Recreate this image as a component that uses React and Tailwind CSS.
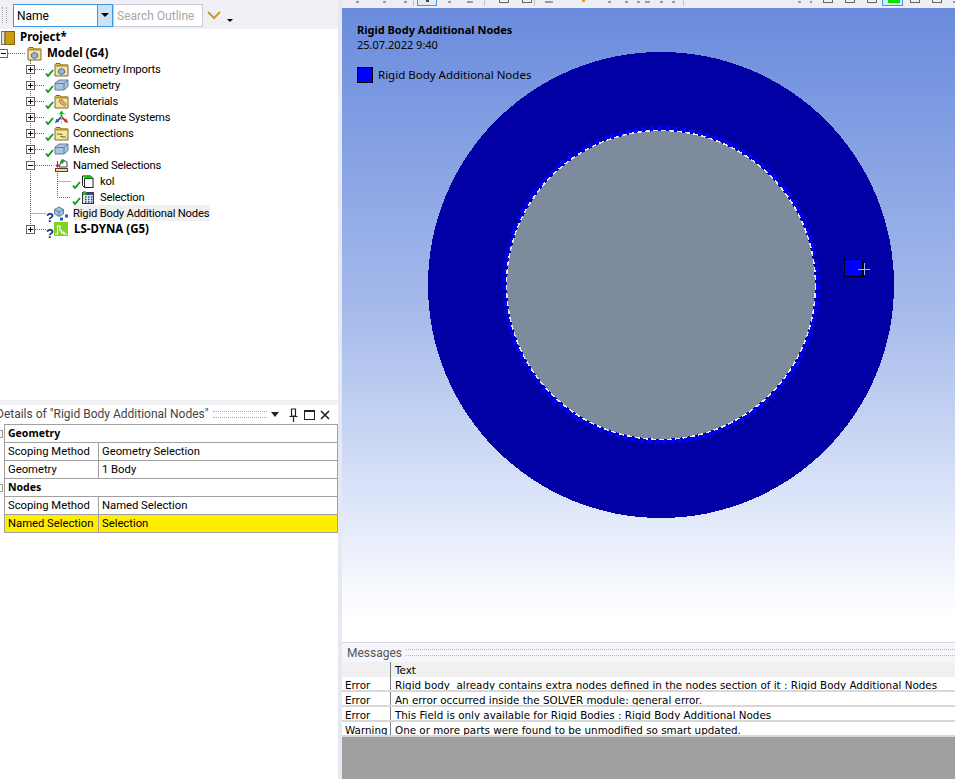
const Check = () => (
  <svg width="9" height="8" viewBox="0 0 9 8" className="block shrink-0">
    <path d="M1 4.5 L3 7 L8 1" fill="none" stroke="#0f9a1f" strokeWidth="1.9" />
  </svg>
);

const Question = () => (
  <span className="block w-[7px] text-center font-['Liberation_Sans',sans-serif] text-[13px] leading-[11px] font-bold text-[#14287f]">
    ?
  </span>
);

const Folder = ({ fill = "#f1e2a6", children }) => (
  <svg width="15" height="15" viewBox="0 0 15 15" className="block">
    <path d="M1 14V2.5L2 1.5H6L7 3H14V14Z" fill={fill} stroke="#7d6a2a" />
    <rect x="1.5" y="2.5" width="12" height="2" fill="#b8901f" />
    {children}
  </svg>
);

const Box = () => (
  <svg width="15" height="15" viewBox="0 0 15 15" className="block">
    <path d="M1 5L5 2H14V8.5L10 12H1Z" fill="#a9c4de" stroke="#5f7f9e" />
    <path d="M1 5.5H10V12M10 5.5L14 2.5" fill="none" stroke="#5f7f9e" />
  </svg>
);

const hex = (
  <path d="M4.5 8L7.5 6.3L10.5 8V11L7.5 12.7L4.5 11Z" fill="#8fb3d8" stroke="#3c5f86" strokeWidth="0.8" />
);

const icons = {
  project: (
    <svg width="14" height="14" viewBox="0 0 14 14" className="block">
      <rect x="0.5" y="0.5" width="3.5" height="13" fill="#e4e4e4" stroke="#777" />
      <rect x="4" y="0.5" width="9.5" height="13" fill="#cb9c12" stroke="#7d6310" />
    </svg>
  ),
  folder: <Folder>{hex}</Folder>,
  box: <Box />,
  materials: (
    <Folder>
      <path d="M5 6L8 5.5L12.5 10.5L10.5 12.5L6 9Z" fill="#e2a671" stroke="#a0703a" strokeWidth="0.7" />
    </Folder>
  ),
  coords: (
    <svg width="15" height="15" viewBox="0 0 15 15" className="block">
      <path d="M3 3L6 6M12 3L9 6M7.5 9V14" stroke="#8aa0b4" strokeWidth="1" strokeDasharray="1 1" />
      <path d="M7.5 7.5V3" stroke="#1fb41f" strokeWidth="2" />
      <path d="M5 4L7.5 0.5L10 4Z" fill="#1fb41f" />
      <path d="M7 7.5L3.5 10.5" stroke="#2a56c8" strokeWidth="2" />
      <path d="M1 13L2.2 8.8L5.2 11.8Z" fill="#2a56c8" />
      <path d="M8 7.5L11.5 10.5" stroke="#d42a2a" strokeWidth="2" />
      <path d="M14 13L12.8 8.8L9.8 11.8Z" fill="#d42a2a" />
    </svg>
  ),
  connections: (
    <Folder fill="#f3e7a8">
      <path d="M3.5 8H7.5V11H12" fill="none" stroke="#80691c" strokeWidth="2" strokeDasharray="1 1" />
    </Folder>
  ),
  named: (
    <svg width="15" height="15" viewBox="0 0 15 15" className="block">
      <path d="M5 9L8 1.5L13 4L13 9Z" fill="#fff" stroke="#444" />
      <path d="M6 4L8.5 1L11 3L8 6Z" fill="#1fa51f" />
      <path d="M3.5 3V8M1.8 6.5L3.5 9L5.2 6.5" fill="none" stroke="#d02020" strokeWidth="1.1" />
      <rect x="1.5" y="10.5" width="12" height="3" fill="#f2dc90" stroke="#444" />
    </svg>
  ),
  kol: (
    <svg width="12" height="15" viewBox="0 0 12 15" className="block">
      <rect x="2.5" y="4.5" width="8.5" height="9" fill="#fff" stroke="#222" />
      <path d="M0.5 2H8.5L11 4.5H2.5V13.5L0.5 11.5Z" fill="#fff" stroke="#222" />
      <path d="M1 1.5H8.5L11 4.5H3Z" fill="#17c017" />
    </svg>
  ),
  selection: (
    <svg width="12" height="15" viewBox="0 0 12 15" className="block">
      <rect x="0.5" y="2.5" width="11" height="11" fill="#dfe6f2" stroke="#333" />
      <rect x="0.5" y="2.5" width="11" height="2.5" fill="#3c4a74" />
      <circle cx="2.5" cy="3" r="2" fill="#17c017" />
      <path d="M3 7H4.5M6 7H7.5M9 7H10.5M3 9.5H4.5M6 9.5H7.5M9 9.5H10.5M3 12H4.5M6 12H7.5M9 12H10.5" stroke="#2a4b9c" strokeWidth="1.4" />
    </svg>
  ),
  rigid: (
    <svg width="15" height="15" viewBox="0 0 15 15" className="block">
      <path d="M0.5 3.5L5 1L9.5 3.5V8L5 10.5L0.5 8Z" fill="#a9c4de" stroke="#5f7f9e" />
      <path d="M0.5 3.5L5 6L9.5 3.5M5 6V10.5" fill="none" stroke="#5f7f9e" />
      <rect x="6" y="11.5" width="3" height="3" fill="#1f5fa8" />
      <rect x="11" y="8.5" width="3" height="3" fill="#1f5fa8" />
    </svg>
  ),
  dyna: (
    <svg width="14" height="14" viewBox="0 0 14 14" className="block">
      <rect width="14" height="14" fill="#7ed321" />
      <path d="M1 12H3.5V4H6V8.5H7.5V11H9V10H10V12H13" fill="none" stroke="#fff" strokeWidth="1.2" />
    </svg>
  ),
};

// one row per line of the outline, guide is what gets drawn in the gutter
const branch = "M30.5 0V4M30.5 12V16M35 8.5H45";
const tree = [
  { text: "Project*", icon: "project", bold: true, iconAt: 1, iconTop: 2, textAt: 20 },
  { text: "Model (G4)", icon: "folder", bold: true, iconAt: 27, textAt: 47, minus: 3, guide: "M8 8.5H26M30.5 15V16" },
  { text: "Geometry Imports", icon: "folder", plus: 30, mark: "check", guide: branch },
  { text: "Geometry", icon: "box", plus: 30, mark: "check", guide: branch },
  { text: "Materials", icon: "materials", plus: 30, mark: "check", guide: branch },
  { text: "Coordinate Systems", icon: "coords", plus: 30, mark: "check", guide: branch },
  { text: "Connections", icon: "connections", plus: 30, mark: "check", guide: branch },
  { text: "Mesh", icon: "box", plus: 30, mark: "check", guide: branch },
  { text: "Named Selections", icon: "named", minus: 30, guide: "M30.5 0V4M30.5 12V16M35 8.5H52M57.5 14V16" },
  { text: "kol", icon: "kol", iconAt: 82, textAt: 100, mark: "check", markAt: 72, guide: "M30.5 0V16M57.5 0V16M57.5 8.5H71" },
  { text: "Selection", icon: "selection", iconAt: 82, textAt: 100, mark: "check", markAt: 72, guide: "M30.5 0V16M57.5 0V8.5H71" },
  { text: "Rigid Body Additional Nodes", icon: "rigid", mark: "question", markAt: 46, hi: true, guide: "M30.5 0V16M30.5 8.5H46" },
  { text: "LS-DYNA (G5)", icon: "dyna", bold: true, plus: 30, mark: "question", markAt: 46, textAt: 74, guide: "M30.5 0V4M35 8.5H46" },
];

function Expander({ at, open }) {
  return (
    <span
      className="flex h-[9px] w-[9px] shrink-0 items-center justify-center border border-[#666] bg-white"
      style={{ marginLeft: at - 4 }}
    >
      <svg width="7" height="7" viewBox="0 0 7 7" className="block">
        <path d={open ? "M1 3.5H6" : "M1 3.5H6M3.5 1V6"} stroke="#000" />
      </svg>
    </span>
  );
}

function TreeRow({ row }) {
  const iconAt = row.iconAt ?? 54;
  const textAt = row.textAt ?? 73;
  const markAt = row.markAt ?? 45;
  return (
    <div className="relative flex h-[16px] items-center whitespace-nowrap">
      {row.guide && (
        <svg width="100" height="16" className="absolute top-0 left-0">
          <path d={row.guide} stroke="#666" strokeDasharray="1 1" fill="none" />
        </svg>
      )}
      {(row.plus !== undefined || row.minus !== undefined) && (
        <span className="absolute top-[4px] left-0 flex">
          <Expander at={row.plus ?? row.minus} open={row.minus !== undefined} />
        </span>
      )}
      <span className="absolute" style={{ left: iconAt, top: row.iconTop ?? 1 }}>
        {icons[row.icon]}
      </span>
      {row.mark && (
        <span className={`absolute z-10 ${row.mark === "check" ? "top-[8px]" : "top-[7px]"}`} style={{ left: markAt }}>
          {row.mark === "check" ? <Check /> : <Question />}
        </span>
      )}
      <span
        className={`h-[16px] text-[#000] ${row.bold ? "font-['Noto_Sans',sans-serif] text-[11.5px] leading-[16px] font-bold" : "text-[11.25px] leading-[18px] tracking-[-0.2px]"} ${row.hi ? "bg-[#f0f0f0] pr-[1px]" : ""}`}
        style={{ marginLeft: textAt }}
      >
        {row.text}
      </span>
    </div>
  );
}

const details = [
  { head: "Geometry" },
  { k: "Scoping Method", v: "Geometry Selection" },
  { k: "Geometry", v: "1 Body" },
  { head: "Nodes" },
  { k: "Scoping Method", v: "Named Selection" },
  { k: "Named Selection", v: "Selection", warn: true },
];

const messages = [
  ["Error", "Rigid body  already contains extra nodes defined in the nodes section of it : Rigid Body Additional Nodes"],
  ["Error", "An error occurred inside the SOLVER module: general error."],
  ["Error", "This Field is only available for Rigid Bodies : Rigid Body Additional Nodes"],
  ["Warning", "One or more parts were found to be unmodified so smart updated."],
];

function Viewport() {
  return (
    <div className="relative h-[634px] overflow-hidden bg-gradient-to-b from-[#6a8bdd] via-[#a9bdec] via-50% to-white to-[96%] text-black">
      <svg width="613" height="634" className="absolute top-0 left-0" shapeRendering="crispEdges">
        <circle cx="319" cy="277" r="233" fill="#0000a5" />
        <circle cx="319" cy="277" r="154" fill="#7d8b9c" />
        <circle cx="319" cy="277" r="157" fill="none" stroke="#0000ff" strokeWidth="3.5" strokeDasharray="5 3" />
        <circle cx="319" cy="277" r="154.5" fill="none" stroke="#e6eaf4" strokeWidth="1.5" strokeDasharray="5 3" />
        <path d="M502.5 251.5H519L521 254V268.5H502.5Z" fill="#0000ff" stroke="#000" strokeWidth="1.2" />
        <path d="M522 255V267M516 261H528" stroke="#a9b6e6" strokeWidth="1" />
      </svg>
      <div className="relative flex flex-col pt-[14px] pl-[15px] font-['Noto_Sans',sans-serif]">
        <div className="text-[11px] leading-[15px] font-bold">Rigid Body Additional Nodes</div>
        <div className="text-[11px] leading-[15px]">25.07.2022 9:40</div>
        <div className="mt-[15px] flex items-center gap-[5px]">
          <span className="h-[16px] w-[16px] border border-black bg-[#0000ff]"></span>
          <span className="text-[11.5px] leading-[16px]">Rigid Body Additional Nodes</span>
        </div>
      </div>
    </div>
  );
}

function Toolbar() {
  // only the bottoms of the toolbar icons are visible at the top of the window
  const marks = [
    [356, 3], [383, 3], [404, 3], [448, 3], [467, 6], [545, 8], [608, 3], [625, 3], [637, 3], [645, 5],
    [660, 3], [672, 3], [798, 3], [810, 2], [953, 2],
  ];
  const boxes = [499, 522, 823, 845, 867, 910, 932];
  return (
    <div className="relative h-[8px] overflow-hidden bg-[#eeeef2]">
      {marks.map(([x, w]) => (
        <span key={x} className="absolute top-[1px] h-[2px] bg-[#9a9a9e]" style={{ left: x - 342, width: w }}></span>
      ))}
      {boxes.map((x) => (
        <span key={x} className="absolute top-0 h-[3px] w-[10px] border-x border-b border-[#666]" style={{ left: x - 342 }}></span>
      ))}
      {[71, 142, 192, 341].map((x) => (
        <span key={x} className="absolute top-0 h-[6px] w-px bg-[#c4c4c8]" style={{ left: x }}></span>
      ))}
      <span className="absolute top-0 left-[75px] h-[6px] w-[20px] border-x border-b border-[#3d9be9] bg-[#e4eaf4]"></span>
      <span className="absolute top-0 left-[84px] h-[2px] w-[3px] bg-[#444]"></span>
      <span className="absolute top-0 left-[240px] h-[2px] w-[3px] bg-[#e0a020]"></span>
      <span className="absolute top-0 left-[540px] h-[6px] w-[21px] border-x border-b border-[#3d9be9] bg-[#d9e8f5]"></span>
      <span className="absolute top-0 left-[546px] h-[3px] w-[12px] bg-[#00e000]"></span>
    </div>
  );
}

export default function App() {
  return (
    <div className="flex h-[779px] w-[955px] overflow-hidden bg-white font-['Roboto',sans-serif] text-[11.25px]">
      <div className="flex w-[338px] shrink-0 flex-col">
        <div className="flex h-[29px] items-center bg-[#f0f0f5] pt-[1px]">
          <div className="ml-[2px] h-[16px] w-[5px] border-x border-dotted border-[#aaa]"></div>
          <div className="ml-[6px] flex h-[23px] w-[100px] border border-[#3f97dd] bg-white">
            <span className="flex-1 pl-[3px] text-[12px] leading-[23px]">Name</span>
            <span className="flex w-[15px] items-center justify-center border-l border-[#3f97dd] bg-[#c8e2f7]">
              <span className="h-0 w-0 border-x-[4px] border-t-[4px] border-x-transparent border-t-black"></span>
            </span>
          </div>
          <div className="h-[23px] w-[90px] border border-[#c9cbd6] bg-white pl-[3px] text-[12px] leading-[23px] text-[#a8a8a8]">
            Search Outline
          </div>
          <svg width="14" height="9" viewBox="0 0 14 9" className="ml-[4px]">
            <path d="M1 1L7 7L13 1" fill="none" stroke="#c99a2e" strokeWidth="2" />
          </svg>
          <span className="mt-[10px] ml-[6px] h-0 w-0 border-x-[3px] border-t-[3px] border-x-transparent border-t-black"></span>
        </div>
        <div className="h-[371px] bg-white">
          {tree.map((row) => (
            <TreeRow key={row.text} row={row} />
          ))}
        </div>
        <div className="h-[5px] bg-[#f0f0f5]"></div>
        <div className="flex h-[19px] items-center overflow-hidden bg-white pr-[8px] text-[#444] whitespace-nowrap">
          <span className="ml-[-4px] text-[12px] leading-[17px]">Details of "Rigid Body Additional Nodes"</span>
          <span className="mx-[4px] h-[7px] flex-1 border-y border-dotted border-[#aaa]"></span>
          <span className="h-0 w-0 border-x-[4px] border-t-[5px] border-x-transparent border-t-[#222]"></span>
          <svg width="11" height="14" viewBox="0 0 11 14" className="ml-[9px]">
            <path d="M3 1H8M3.5 1V8H7.5V1M1.5 8.5H9.5M5.5 9V14" fill="none" stroke="#222" strokeWidth="1.2" />
          </svg>
          <span className="ml-[5px] h-[10px] w-[11px] border border-t-2 border-[#222]"></span>
          <svg width="10" height="10" viewBox="0 0 10 10" className="ml-[5px]">
            <path d="M1 1L9 9M9 1L1 9" stroke="#222" strokeWidth="1.6" />
          </svg>
        </div>
        <div className="ml-[4px] border-t border-l border-[#a0a0a0] text-black">
          {details.map((row, i) =>
            row.head ? (
              <div key={i} className="relative h-[18px] border-r border-b border-[#a0a0a0] pl-[3px] font-['Noto_Sans',sans-serif] text-[10.5px] leading-[16px] font-bold">
                <span className="absolute top-[5px] left-[-6px] h-[8px] w-[4px] border border-l-0 border-[#999] bg-white"></span>
                {row.head}
              </div>
            ) : (
              <div key={i} className={`flex h-[18px] border-r border-b border-[#a0a0a0] leading-[18px] ${row.warn ? "bg-[#ffee00]" : ""}`}>
                <span className="w-[94px] border-r border-[#a0a0a0] pl-[3px] whitespace-nowrap">{row.k}</span>
                <span className="pl-[3px]">{row.v}</span>
              </div>
            ),
          )}
        </div>
      </div>
      <div className="w-[4px] shrink-0 bg-[#e6e8f2]"></div>
      <div className="flex min-w-0 flex-1 flex-col">
        <Toolbar />
        <Viewport />
        <div className="flex h-[20px] items-center border-t border-[#d4d6e2] bg-[#f5f6fa] pl-[5px] text-[12px] whitespace-nowrap text-[#555]">
          Messages
          <span className="ml-[4px] h-[7px] flex-1 border-y border-dotted border-[#bbb]"></span>
        </div>
        <div className="font-['DejaVu_Sans',sans-serif] text-[10.35px] text-black">
          <div className="flex h-[15px] bg-[#f0f0f0] leading-[16px]">
            <span className="w-[49px] border-r border-[#808080]"></span>
            <span className="pl-[4px]">Text</span>
          </div>
          {messages.map(([kind, text], i) => (
            <div key={i} className="flex h-[15px] overflow-hidden border-b-2 border-[#d8d8d8] bg-white leading-[16px] whitespace-pre">
              <span className="w-[49px] overflow-hidden border-r border-[#808080] pl-[3px]">{kind}</span>
              <span className="pl-[4px]">{text}</span>
            </div>
          ))}
        </div>
        <div className="flex-1 bg-[#a0a0a0]"></div>
      </div>
    </div>
  );
}
